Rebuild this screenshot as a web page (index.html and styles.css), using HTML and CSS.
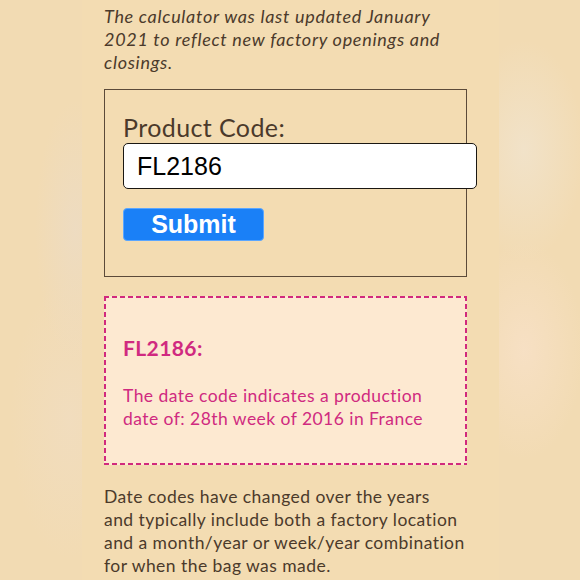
FILE: index.html
```html
<!DOCTYPE html>
<html>
<head>
<meta charset="utf-8">
<link rel="stylesheet" href="styles.css">
</head>
<body>
<div class="frame">
  <div class="side side-left"></div>
  <main class="page">
    <p class="note">The calculator was last updated January 2021 to reflect new factory openings and closings.</p>
    <form class="calc">
      <label class="label" for="code">Product Code:</label>
      <input class="input" id="code" type="text" value="FL2186">
      <button class="submit" type="button">Submit</button>
    </form>
    <section class="result">
      <h2 class="result-code">FL2186:</h2>
      <p class="result-text">The date code indicates a production date of: 28th week of 2016 in France</p>
    </section>
    <p class="info">Date codes have changed over the years<br> and typically include both a factory location<br> and a month/year or week/year combination<br> for when the bag was made.</p>
  </main>
  <div class="side side-right"></div>
</div>
</body>
</html>
```

FILE: styles.css
```css
* { box-sizing: border-box; }
html, body { margin: 0; padding: 0; }
body { width: 580px; height: 580px; overflow: hidden; font-family: "Lato", "Noto Sans", sans-serif; }
.frame { display: flex; height: 580px; }
.side { flex: none; }
.side-left {
  width: 82px;
  background:
    radial-gradient(ellipse 40px 130px at 75px 230px, rgba(234,220,204,0.55), rgba(234,220,204,0) 100%),
    radial-gradient(ellipse 60px 140px at 70px 420px, rgba(240,222,200,0.5), rgba(240,222,200,0) 100%),
    #f2dbb3;
}
.side-right {
  width: 81px;
  background:
    radial-gradient(ellipse 60px 110px at 25px 150px, rgba(241,228,206,0.8), rgba(241,228,206,0) 100%),
    radial-gradient(ellipse 60px 110px at 25px 350px, rgba(248,225,200,0.8), rgba(248,225,200,0) 100%),
    #f2dbb3;
}
.page {
  width: 417px;
  flex: none;
  background: #f3dcb2;
  padding: 5px 0 0 22px;
  color: #4b3a2b;
}
.note {
  margin: 0;
  width: 345px;
  font-style: italic;
  font-size: 18px;
  letter-spacing: 0.7px;
  line-height: 23px;
}
.calc {
  margin-top: 15px;
  width: 363px;
  height: 188px;
  border: 1px solid #5b4a39;
  padding: 22px 0 0 18px;
  display: flex;
  flex-direction: column;
  align-items: flex-start;
}
.label {
  font-size: 25px;
  line-height: 30px;
  letter-spacing: 0.4px;
  color: #4b3a2b;
}
.input {
  margin-top: 1px;
  width: 354px;
  height: 46px;
  border: 1.5px solid #1a1712;
  border-radius: 5px;
  background: #fff;
  padding: 0 0 0 13px;
  font-family: "Liberation Sans", Arial, sans-serif;
  font-size: 25px;
  color: #000;
}
.submit {
  margin-top: 19px;
  width: 141px;
  height: 33px;
  border: 1px solid #5aa6ff;
  border-radius: 4px;
  background: #1a80f7;
  color: #fff;
  font-family: "Liberation Sans", Arial, sans-serif;
  font-weight: bold;
  font-size: 25px;
  padding: 0;
  line-height: 31px;
}
.result {
  margin-top: 19px;
  width: 363px;
  height: 169px;
  padding: 39px 0 0 19px;
  color: #d02a80;
  background:
    repeating-linear-gradient(90deg, #d12a7d 0 5px, transparent 5px 8px) left top / 100% 2px no-repeat,
    repeating-linear-gradient(90deg, #d12a7d 0 5px, transparent 5px 8px) left bottom / 100% 2px no-repeat,
    repeating-linear-gradient(180deg, #d12a7d 0 5px, transparent 5px 8px) left top / 2px 100% no-repeat,
    repeating-linear-gradient(180deg, #d12a7d 0 5px, transparent 5px 8px) right top / 2px 100% no-repeat,
    #fde9d1;
}
.result-code {
  margin: 0;
  font-size: 21px;
  line-height: 26px;
  font-weight: bold;
  letter-spacing: 0.4px;
}
.result-text {
  margin: 23px 0 0;
  font-size: 17.5px;
  line-height: 23px;
  letter-spacing: 0.45px;
  width: 320px;
}
.info {
  margin: 20px 0 0;
  width: 385px;
  font-size: 17.5px;
  line-height: 23px;
  letter-spacing: 0.45px;
}
```
